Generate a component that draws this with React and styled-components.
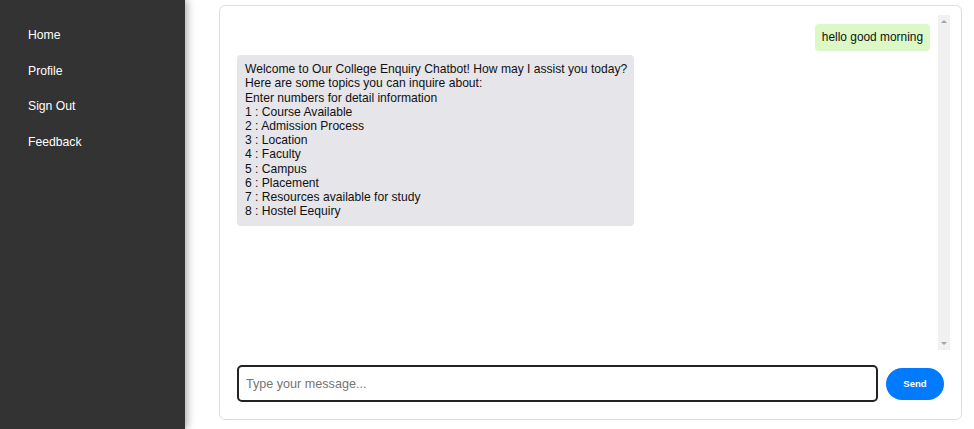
import styled, { createGlobalStyle } from 'styled-components';

const GlobalStyle = createGlobalStyle`
    html, body {
        margin: 0;
        padding: 0;
        background: #fff;
        font-family: "Liberation Sans", Arial, sans-serif;
    }
`;

const Layout = styled.div`
    display: flex;
    height: 429px;
    overflow: hidden;
`;

const Sidebar = styled.nav`
    width: 185px;
    flex-shrink: 0;
    background: #333;
    box-shadow: 2px 0 8px rgba(0, 0, 0, 0.35);
    padding: 18px 0 0 28px;
    box-sizing: border-box;
    position: relative;
    z-index: 1;
`;

const NavList = styled.ul`
    list-style: none;
    margin: 0;
    padding: 0;
`;

const NavItem = styled.li`
    color: #fff;
    font-size: 12.2px;
    line-height: 15.5px;
    padding: 10px 0;
    cursor: pointer;
`;

const Main = styled.main`
    flex: 1;
    padding: 5px 12px 9px 34px;
    box-sizing: border-box;
    display: flex;
`;

const ChatPanel = styled.section`
    flex: 1;
    border: 1px solid #ddd;
    border-radius: 6px;
    background: #fff;
    padding: 9px 11px 17px 17px;
    display: flex;
    flex-direction: column;
    min-height: 0;
`;

const ChatBody = styled.div`
    flex: 1;
    min-height: 0;
    display: flex;
`;

const Messages = styled.div`
    flex: 1;
    min-width: 0;
    overflow: hidden;
    padding: 9px 8px 0 0;
    display: flex;
    flex-direction: column;
    align-items: flex-start;
    gap: 4px;
`;

const ScrollTrack = styled.div`
    width: 12px;
    flex-shrink: 0;
    background: #f1f1f1;
    display: flex;
    flex-direction: column;
    justify-content: space-between;
    align-items: center;
    padding: 5px 0;
    box-sizing: border-box;
`;

const Arrow = styled.span`
    width: 0;
    height: 0;
    border-left: 3px solid transparent;
    border-right: 3px solid transparent;
    ${(p) =>
        p.$down
            ? 'border-top: 3px solid #a3a3a3;'
            : 'border-bottom: 3px solid #a3a3a3;'}
`;

const Bubble = styled.div`
    align-self: ${(p) => (p.$user ? 'flex-end' : 'flex-start')};
    background: ${(p) => (p.$user ? '#dcf8c6' : '#e5e5ea')};
    color: #111;
    font-size: ${(p) => (p.$user ? '11.9px' : '12.1px')};
    line-height: 14.2px;
    padding: ${(p) => (p.$user ? '6px 7px 7px 7px' : '7px 7px 8px 8px')};
    border-radius: 4px;
    white-space: pre-line;
`;

const InputRow = styled.form`
    display: flex;
    align-items: center;
    gap: 8px;
    margin-top: 15px;
    padding-right: 6px;
`;

const MessageInput = styled.input`
    flex: 1;
    height: 37px;
    box-sizing: border-box;
    border: 2px solid #222;
    border-radius: 5px;
    padding: 0 7px;
    font-family: "Liberation Sans", Arial, sans-serif;
    font-size: 12.6px;
    color: #111;
    outline: none;

    &::placeholder {
        color: #757575;
    }
`;

const SendButton = styled.button`
    width: 58px;
    height: 32px;
    border: none;
    border-radius: 16px;
    background: #007bff;
    color: #fff;
    font-family: "Liberation Sans", Arial, sans-serif;
    font-weight: bold;
    font-size: 9.6px;
    cursor: pointer;
`;

const navLinks = ['Home', 'Profile', 'Sign Out', 'Feedback'];

const welcome = [
    'Welcome to Our College Enquiry Chatbot! How may I assist you today?',
    'Here are some topics you can inquire about:',
    'Enter numbers for detail information',
    '1 : Course Available',
    '2 : Admission Process',
    '3 : Location',
    '4 : Faculty',
    '5 : Campus',
    '6 : Placement',
    '7 : Resources available for study',
    '8 : Hostel Eequiry',
].join('\n');

export default function App() {
    return (
        <>
            <GlobalStyle />
            <Layout>
                <Sidebar>
                    <NavList>
                        {navLinks.map((link) => (
                            <NavItem key={link}>{link}</NavItem>
                        ))}
                    </NavList>
                </Sidebar>
                <Main>
                    <ChatPanel>
                        <ChatBody>
                            <Messages>
                                <Bubble $user>hello good morning</Bubble>
                                <Bubble>{welcome}</Bubble>
                            </Messages>
                            <ScrollTrack>
                                <Arrow />
                                <Arrow $down />
                            </ScrollTrack>
                        </ChatBody>
                        <InputRow onSubmit={(e) => e.preventDefault()}>
                            <MessageInput placeholder="Type your message..." autoFocus />
                            <SendButton type="submit">Send</SendButton>
                        </InputRow>
                    </ChatPanel>
                </Main>
            </Layout>
        </>
    );
}
